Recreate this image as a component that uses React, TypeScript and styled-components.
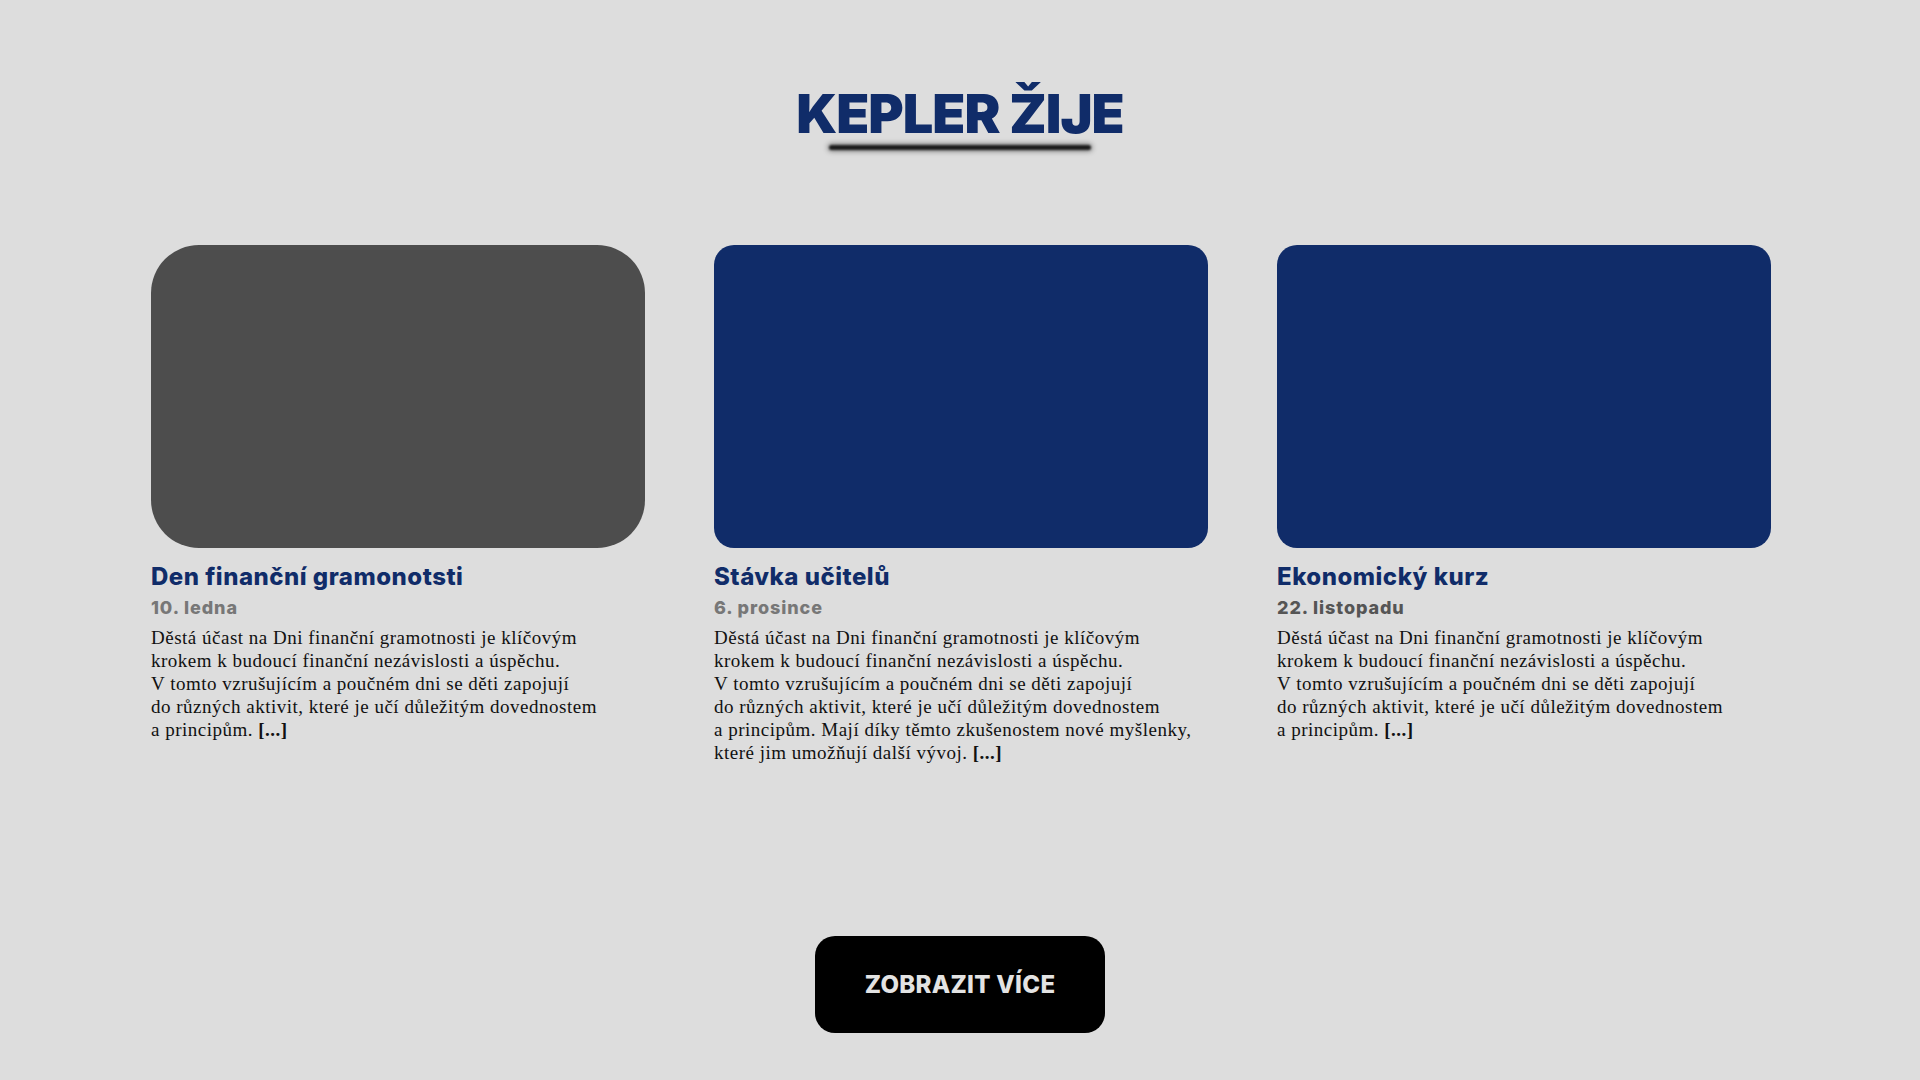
import React from "react";
import styled, { createGlobalStyle } from "styled-components";

const GlobalStyle = createGlobalStyle`
  html, body {
    margin: 0;
    padding: 0;
    background: #dddddd;
  }
  body {
    font-family: "Liberation Serif", "Times New Roman", serif;
  }
`;

const Page = styled.main`
  min-height: 1080px;
  box-sizing: border-box;
  padding-top: 87px;
  display: flex;
  flex-direction: column;
  align-items: center;
`;

const Title = styled.h1`
  margin: 0;
  font-family: Inter, "Noto Sans", sans-serif;
  font-weight: 900;
  font-size: 54px;
  line-height: 1;
  letter-spacing: -1px;
  color: #102c69;
`;

// the blurred bar under the heading
const Underline = styled.div`
  width: 262px;
  height: 5px;
  margin-top: 4px;
  border-radius: 3px;
  background: #1c1c1c;
  box-shadow: 0 0 5px 1px rgba(0, 0, 0, 0.5);
  filter: blur(0.8px);
`;

const Grid = styled.section`
  margin-top: 95px;
  padding-left: 2px;
  display: grid;
  grid-template-columns: repeat(3, 494px);
  column-gap: 69px;
  justify-content: center;
  align-items: start;
`;

const Card = styled.article`
  display: flex;
  flex-direction: column;
`;

const Cover = styled.div<{ $tone: string; $radius: number }>`
  width: 100%;
  height: 303px;
  border-radius: ${(p) => p.$radius}px;
  background: ${(p) => p.$tone};
`;

const Heading = styled.h2`
  margin: 14px 0 0;
  font-family: Inter, "Noto Sans", sans-serif;
  font-weight: 800;
  font-size: 24px;
  line-height: 29px;
  letter-spacing: 0.5px;
  color: #102c69;
`;

const Date = styled.div<{ $tone: string }>`
  margin-top: 7px;
  font-family: Inter, "Noto Sans", sans-serif;
  font-weight: 800;
  font-size: 18px;
  line-height: 20px;
  letter-spacing: 0.9px;
  color: ${(p) => p.$tone};
`;

const Body = styled.p`
  margin: 8px 0 0;
  font-family: "Liberation Serif", "Times New Roman", serif;
  font-size: 19px;
  line-height: 23px;
  letter-spacing: 0.5px;
  color: #111111;

  b {
    font-weight: 700;
  }
`;

const More = styled.button`
  margin-top: 172px;
  width: 290px;
  height: 97px;
  border: 0;
  border-radius: 20px;
  background: #000000;
  color: #e3e3e3;
  font-family: Inter, "Noto Sans", sans-serif;
  font-weight: 800;
  font-size: 24px;
  letter-spacing: 0.3px;
  cursor: pointer;
`;

const intro = (
  <>
    Děstá účast na Dni finanční gramotnosti je klíčovým
    <br />
    krokem k budoucí finanční nezávislosti a úspěchu.
    <br />V tomto vzrušujícím a poučném dni se děti zapojují
    <br />
    do různých aktivit, které je učí důležitým dovednostem
    <br />
  </>
);

const posts = [
  {
    title: "Den finanční gramonotsti",
    date: "10. ledna",
    dateTone: "#777777",
    cover: "#4d4d4d",
    radius: 48,
    tail: <>a principům. <b>[...]</b></>
  },
  {
    title: "Stávka učitelů",
    date: "6. prosince",
    dateTone: "#777777",
    cover: "#102c69",
    radius: 20,
    tail: (
      <>
        a principům. Mají díky těmto zkušenostem nové myšlenky,
        <br />
        které jim umožňují další vývoj. <b>[...]</b>
      </>
    )
  },
  {
    title: "Ekonomický kurz",
    date: "22. listopadu",
    dateTone: "#555555",
    cover: "#102c69",
    radius: 20,
    tail: <>a principům. <b>[...]</b></>
  }
];

const App = () => {
  return (
    <>
      <GlobalStyle />
      <Page>
        <Title>KEPLER ŽIJE</Title>
        <Underline />
        <Grid>
          {posts.map((post) => (
            <Card key={post.title}>
              <Cover $tone={post.cover} $radius={post.radius} />
              <Heading>{post.title}</Heading>
              <Date $tone={post.dateTone}>{post.date}</Date>
              <Body>
                {intro}
                {post.tail}
              </Body>
            </Card>
          ))}
        </Grid>
        <More>ZOBRAZIT VÍCE</More>
      </Page>
    </>
  );
};

export default App;
